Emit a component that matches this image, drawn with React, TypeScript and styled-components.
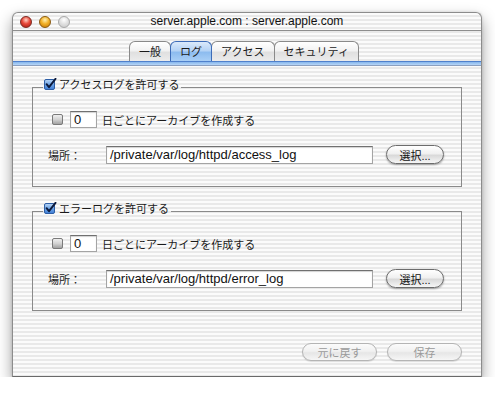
import React from "react";
import styled, { createGlobalStyle } from "styled-components";

const GlobalStyle = createGlobalStyle`
  html, body { margin: 0; padding: 0; background: #ffffff; }
  body { font-family: "Liberation Sans", "Noto Sans CJK JP", sans-serif; color: #000; }
`;

const pinstripe = `repeating-linear-gradient(to bottom, #fbfbfb 0px, #fbfbfb 2px, #e9e9e9 2px, #e9e9e9 4px)`;

const Page = styled.div`
  padding: 12px 0 0 12px;
`;

const Window = styled.div`
  width: 470px;
  height: 365px;
  box-sizing: border-box;
  border: 1px solid #8c8c8c;
  border-bottom-color: #6a6a6a;
  border-radius: 6px 6px 0 0;
  background: ${pinstripe};
  box-shadow: 0 7px 15px rgba(0, 0, 0, 0.38), 0 0 3px rgba(0, 0, 0, 0.15);
  display: flex;
  flex-direction: column;
  overflow: hidden;
`;

const TitleBar = styled.div`
  height: 17px;
  border-bottom: 1px solid #8e8e8e;
  display: grid;
  grid-template-columns: 1fr auto 1fr;
  align-items: center;
  padding: 0 7px;
`;

const Lights = styled.div`
  display: flex;
  gap: 7px;
  align-items: center;
`;

const lightColors: Record<string, [string, string, string, string]> = {
  red: ["#ffd0c4", "#e8493a", "#a4170e", "#7e2a22"],
  yellow: ["#fff0b0", "#f2b22a", "#c27400", "#8a5a10"],
  grey: ["#ffffff", "#e2e2e2", "#c4c4c4", "#a8a8a8"],
};

const Light = styled.span<{ $c: string }>`
  width: 12px;
  height: 12px;
  box-sizing: border-box;
  border-radius: 50%;
  border: 1px solid ${(p) => lightColors[p.$c][3]};
  background: radial-gradient(circle at 50% 30%, ${(p) => lightColors[p.$c][0]} 0%, ${(p) =>
      lightColors[p.$c][1]} 45%, ${(p) => lightColors[p.$c][2]} 100%);
`;

const Title = styled.div`
  font-size: 12px;
  line-height: 17px;
  color: #111;
  white-space: nowrap;
`;

const TabRow = styled.div`
  margin-top: 10px;
  display: flex;
  justify-content: center;
  padding-right: 5px;
`;

const Tab = styled.div<{ $active?: boolean }>`
  height: 20px;
  box-sizing: border-box;
  padding: 0 9px;
  margin-left: -1px;
  border: 1px solid ${(p) => (p.$active ? "#3d6cb8" : "#8a8a8a")};
  border-bottom: none;
  border-radius: 6px 6px 0 0;
  background: ${(p) =>
    p.$active
      ? "linear-gradient(to bottom, #dbeafb 0%, #b5d3f5 45%, #8dbcef 55%, #a9cff6 100%)"
      : "linear-gradient(to bottom, #ffffff 0%, #f2f2f2 45%, #e0e0e0 55%, #ececec 100%)"};
  font-family: "Noto Sans CJK JP", sans-serif;
  font-size: 11px;
  line-height: 19px;
  color: #1a1a1a;
  position: relative;
  z-index: ${(p) => (p.$active ? 2 : 1)};
  white-space: nowrap;
`;

const Band = styled.div`
  height: 5px;
  box-sizing: border-box;
  border-top: 1px solid #4f80cc;
  border-bottom: 1px solid #8b9fbf;
  background: linear-gradient(to bottom, #86b6ec, #b7d6f7);
`;

const Content = styled.div`
  padding: 11px 19px 0 19px;
  display: flex;
  flex-direction: column;
`;

const Group = styled.div<{ $mt?: number }>`
  margin-top: ${(p) => p.$mt ?? 0}px;
  display: flex;
  flex-direction: column;
`;

const GroupHeader = styled.div`
  display: flex;
  align-items: center;
  height: 14px;
  &::before {
    content: "";
    align-self: stretch;
    width: 10px;
    margin-top: 10px;
    border-top: 1px solid #8a8a8a;
    border-left: 1px solid #8a8a8a;
  }
  &::after {
    content: "";
    flex: 1;
    align-self: stretch;
    margin-top: 10px;
    margin-left: 2px;
    border-top: 1px solid #8a8a8a;
    border-right: 1px solid #8a8a8a;
  }
`;

const Legend = styled.div`
  display: flex;
  align-items: center;
  gap: 2px;
  margin-left: 1px;
`;

const JText = styled.span`
  font-family: "Noto Sans CJK JP", sans-serif;
  font-size: 11px;
  line-height: 14px;
  white-space: nowrap;
  color: #1a1a1a;
`;

const GroupBody = styled.div`
  border: 1px solid #8a8a8a;
  border-top: none;
  padding: 20px 17px 22px 15px;
  display: flex;
  flex-direction: column;
  gap: 17px;
`;

const Row = styled.div<{ $indent?: number }>`
  display: flex;
  align-items: center;
  padding-left: ${(p) => p.$indent ?? 0}px;
`;

const Field = styled.div<{ $w: number; $h: number }>`
  width: ${(p) => p.$w}px;
  height: ${(p) => p.$h}px;
  box-sizing: border-box;
  background: #ffffff;
  border: 1px solid #a4a4a4;
  border-top-color: #707070;
  box-shadow: inset 0 1px 1px rgba(0, 0, 0, 0.18);
  padding: 0 3px;
  display: flex;
  align-items: center;
  font-size: 13px;
  color: #111;
  white-space: nowrap;
  overflow: hidden;
`;

const Label = styled(JText)<{ $w?: number; $ml?: number }>`
  display: inline-block;
  width: ${(p) => (p.$w ? `${p.$w}px` : "auto")};
  margin-left: ${(p) => p.$ml ?? 0}px;
`;

const PillButton = styled.div<{ $w: number; $h: number; $disabled?: boolean; $ml?: number }>`
  width: ${(p) => p.$w}px;
  height: ${(p) => p.$h}px;
  margin-left: ${(p) => p.$ml ?? 0}px;
  box-sizing: border-box;
  border-radius: 10px;
  border: 1px solid ${(p) => (p.$disabled ? "#b4b4b4" : "#6c6c6c")};
  background: ${(p) =>
    p.$disabled
      ? "linear-gradient(to bottom, #fbfbfb 0%, #f1f1f1 45%, #e6e6e6 55%, #f6f6f6 100%)"
      : "linear-gradient(to bottom, #ffffff 0%, #f0f0f0 45%, #d9d9d9 55%, #f6f6f6 100%)"};
  box-shadow: ${(p) => (p.$disabled ? "0 1px 1px rgba(0,0,0,0.12)" : "0 1px 2px rgba(0,0,0,0.35)")};
  display: flex;
  align-items: center;
  justify-content: center;
  font-family: "Liberation Sans", "Noto Sans CJK JP", sans-serif;
  font-size: 11px;
  color: ${(p) => (p.$disabled ? "#9a9a9a" : "#111")};
  white-space: nowrap;
`;

const ButtonBar = styled.div`
  margin-top: 32px;
  display: flex;
  justify-content: flex-end;
  gap: 10px;
`;

const CheckedBox = () => (
  <svg width="13" height="12" viewBox="0 0 13 12">
    <defs>
      <linearGradient id="cbBlue" x1="0" y1="0" x2="0" y2="1">
        <stop offset="0" stopColor="#b9d6f6" />
        <stop offset="0.5" stopColor="#6ea4e6" />
        <stop offset="1" stopColor="#3f7ed6" />
      </linearGradient>
    </defs>
    <rect x="0.5" y="1.5" width="10" height="10" rx="1.5" fill="url(#cbBlue)" stroke="#2d5ea6" />
    <path d="M2.6 6.2 L5 9.2 L11.5 0.8" fill="none" stroke="#0c1a3c" strokeWidth="1.9" strokeLinecap="round" strokeLinejoin="round" />
  </svg>
);

const EmptyBox = () => (
  <svg width="11" height="11" viewBox="0 0 11 11">
    <defs>
      <linearGradient id="cbGrey" x1="0" y1="0" x2="0" y2="1">
        <stop offset="0" stopColor="#f2f2f2" />
        <stop offset="0.5" stopColor="#d2d2d2" />
        <stop offset="1" stopColor="#9c9c9c" />
      </linearGradient>
    </defs>
    <rect x="0.5" y="0.5" width="10" height="10" rx="1.5" fill="url(#cbGrey)" stroke="#7a7a7a" />
  </svg>
);

const BoxWrap = styled.span`
  display: inline-flex;
  width: 11px;
  margin-right: 7px;
`;

type LogGroupProps = { title: string; path: string; mt?: number };

const LogGroup = ({ title, path, mt }: LogGroupProps) => (
  <Group $mt={mt}>
    <GroupHeader>
      <Legend>
        <CheckedBox />
        <JText>{title}</JText>
      </Legend>
    </GroupHeader>
    <GroupBody>
      <Row $indent={4}>
        <BoxWrap>
          <EmptyBox />
        </BoxWrap>
        <Field $w={27} $h={17}>0</Field>
        <Label $ml={5}>日ごとにアーカイブを作成する</Label>
      </Row>
      <Row>
        <Label $w={58}>場所：</Label>
        <Field $w={267} $h={18}>{path}</Field>
        <PillButton $w={58} $h={19} $ml={13}>
          選択...
        </PillButton>
      </Row>
    </GroupBody>
  </Group>
);

export default function App() {
  return (
    <>
      <GlobalStyle />
      <Page>
        <Window>
          <TitleBar>
            <Lights>
              <Light $c="red" />
              <Light $c="yellow" />
              <Light $c="grey" />
            </Lights>
            <Title>server.apple.com : server.apple.com</Title>
            <div />
          </TitleBar>
          <TabRow>
            <Tab>一般</Tab>
            <Tab $active>ログ</Tab>
            <Tab>アクセス</Tab>
            <Tab>セキュリティ</Tab>
          </TabRow>
          <Band />
          <Content>
            <LogGroup title="アクセスログを許可する" path="/private/var/log/httpd/access_log" />
            <LogGroup title="エラーログを許可する" path="/private/var/log/httpd/error_log" mt={14} />
            <ButtonBar>
              <PillButton $w={75} $h={18} $disabled>
                元に戻す
              </PillButton>
              <PillButton $w={75} $h={18} $disabled>
                保存
              </PillButton>
            </ButtonBar>
          </Content>
        </Window>
      </Page>
    </>
  );
}
